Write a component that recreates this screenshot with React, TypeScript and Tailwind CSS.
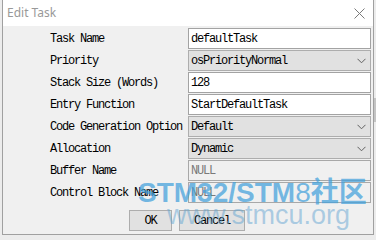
import React from "react";

const mono = { fontFamily: '"Liberation Mono", "DejaVu Sans Mono", monospace' };

function Chevron() {
  return (
    <svg width="9" height="6" viewBox="0 0 9 6" className="shrink-0">
      <path d="M0.5 0.8 L4.5 4.8 L8.5 0.8" fill="none" stroke="#606060" strokeWidth="1" />
    </svg>
  );
}

type Row = { label: string; value: string; kind: "input" | "select" | "disabled" };

const rows: Row[] = [
  { label: "Task Name", value: "defaultTask", kind: "input" },
  { label: "Priority", value: "osPriorityNormal", kind: "select" },
  { label: "Stack Size (Words)", value: "128", kind: "input" },
  { label: "Entry Function", value: "StartDefaultTask", kind: "input" },
  { label: "Code Generation Option", value: "Default", kind: "select" },
  { label: "Allocation", value: "Dynamic", kind: "select" },
  { label: "Buffer Name", value: "NULL", kind: "disabled" },
  { label: "Control Block Name", value: "NULL", kind: "disabled" },
];

function Field({ row }: { row: Row }) {
  if (row.kind === "input") {
    return (
      <div className="h-[21px] border border-[#a3a3a3] bg-white flex items-center pl-[2px] text-[12px] tracking-[-1.2px] text-black">
        {row.value}
      </div>
    );
  }
  if (row.kind === "select") {
    return (
      <div className="h-[21px] border border-[#adadad] bg-[#e1e1e1] flex items-center justify-between pl-[2px] pr-[4px] text-[12px] tracking-[-1.2px] text-black">
        <span>{row.value}</span>
        <Chevron />
      </div>
    );
  }
  return (
    <div className="h-[21px] border border-[#a8a8a8] bg-[#f0f0f0] flex items-center pl-[2px] text-[12px] tracking-[-1.2px] text-[#7a7a7a]">
      {row.value}
    </div>
  );
}

export default function App() {
  return (
    <div className="relative w-[376px] h-[240px] overflow-hidden bg-[#ececec] flex">
      <div className="w-[2px] shrink-0" />
      <div className="w-[372px] h-[235px] shrink-0 border-x border-b border-[#a0a0a0] bg-[#f0f0f0] flex flex-col">
        <div className="h-[26px] bg-white flex items-center justify-between pl-[4px]">
          <span className="text-[12px] text-[#999999]" style={{ fontFamily: '"Noto Sans", sans-serif' }}>
            Edit Task
          </span>
          <div className="w-[28px] h-[26px] flex items-center justify-center">
            <svg width="11" height="11" viewBox="0 0 11 11">
              <path d="M0.5 0.5 L10.5 10.5 M10.5 0.5 L0.5 10.5" stroke="#7a7a7a" strokeWidth="1" fill="none" />
            </svg>
          </div>
        </div>
        <div className="pl-[47px] pt-[2px] flex flex-col" style={mono}>
          {rows.map((r) => (
            <div key={r.label} className="h-[22px] grid grid-cols-[138px_183px]">
              <div className="h-[21px] flex items-center text-[12px] tracking-[-1.2px] text-black whitespace-nowrap">
                {r.label}
              </div>
              <Field row={r} />
            </div>
          ))}
          <div className="mt-[6px] ml-[79px] flex gap-[7px]">
            <div className="w-[43px] h-[21px] border border-[#adadad] bg-[#e1e1e1] flex items-center justify-center text-[12px] tracking-[-1.2px] text-black">
              OK
            </div>
            <div className="w-[66px] h-[21px] border border-[#adadad] bg-[#e1e1e1] flex items-center justify-center text-[12px] tracking-[-1.2px] text-black">
              Cancel
            </div>
          </div>
        </div>
      </div>
      <div className="flex-1 flex flex-col">
        <div className="h-[98px]" />
        <div className="h-[24px] bg-[#c4c4c4]" />
      </div>
      <span
        className="pointer-events-none absolute left-[138px] top-[179px] text-[28px] leading-[28px] font-bold whitespace-nowrap text-[rgba(66,160,220,0.72)]"
        style={{ fontFamily: '"Liberation Sans", "Noto Sans CJK SC", sans-serif' }}
      >
        STM32/STM<span className="font-normal">8</span>社区
      </span>
      <span
        className="pointer-events-none absolute left-[167px] top-[202px] text-[27px] leading-[27px] whitespace-nowrap text-[rgba(100,165,210,0.5)]"
        style={{ fontFamily: '"Liberation Sans", sans-serif' }}
      >
        www.stmcu.org
      </span>
    </div>
  );
}
